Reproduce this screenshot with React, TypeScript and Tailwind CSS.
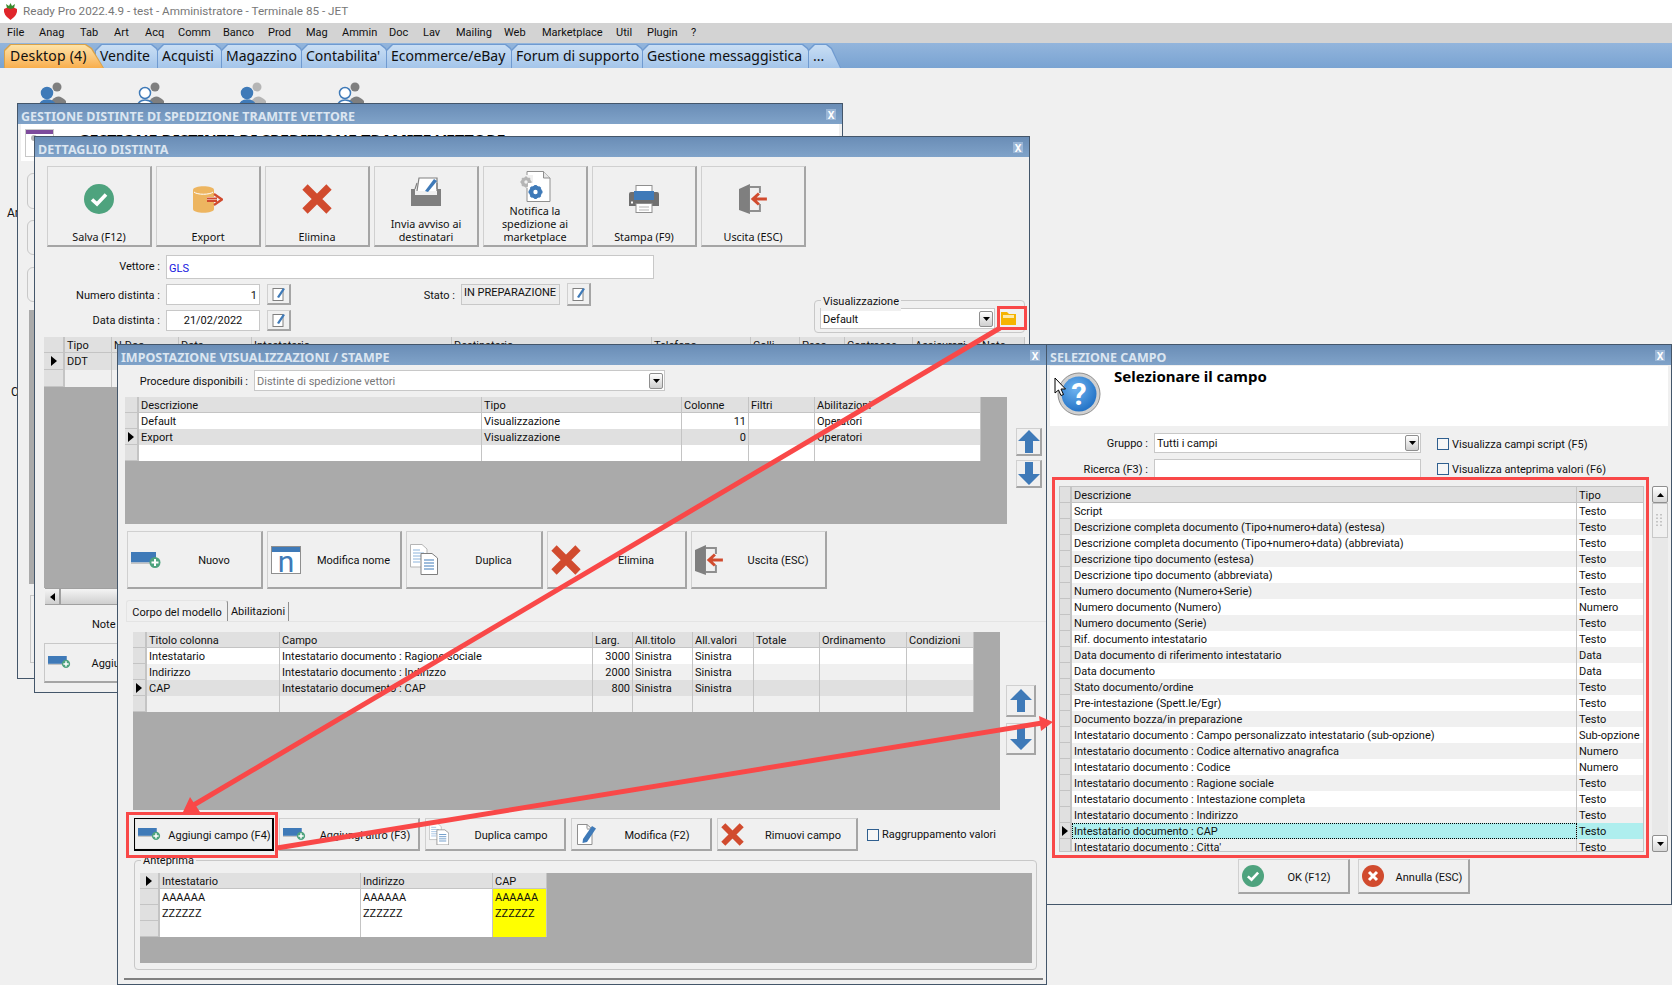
import type { ReactNode } from "react";

const menus = [
  { label: "File", w: "w-[32px]" },
  { label: "Anag", w: "w-[41px]" },
  { label: "Tab", w: "w-[34px]" },
  { label: "Art", w: "w-[31px]" },
  { label: "Acq", w: "w-[33px]" },
  { label: "Comm", w: "w-[45px]" },
  { label: "Banco", w: "w-[45px]" },
  { label: "Prod", w: "w-[38px]" },
  { label: "Mag", w: "w-[36px]" },
  { label: "Ammin", w: "w-[47px]" },
  { label: "Doc", w: "w-[34px]" },
  { label: "Lav", w: "w-[33px]" },
  { label: "Mailing", w: "w-[48px]" },
  { label: "Web", w: "w-[38px]" },
  { label: "Marketplace", w: "w-[74px]" },
  { label: "Util", w: "w-[31px]" },
  { label: "Plugin", w: "w-[44px]" },
  { label: "?", w: "w-[10px]" },
];

const tabs = [
  { label: "Vendite", w: "w-[71px]" },
  { label: "Acquisti", w: "w-[73px]" },
  { label: "Magazzino", w: "w-[89px]" },
  { label: "Contabilita'", w: "w-[94px]" },
  { label: "Ecommerce/eBay", w: "w-[134px]" },
  { label: "Forum di supporto", w: "w-[140px]" },
  { label: "Gestione messaggistica", w: "w-[175px]" },
  { label: "...", w: "w-[33px]" },
];

const fields: [string, string][] = [
  ["Script", "Testo"],
  ["Descrizione completa documento (Tipo+numero+data) (estesa)", "Testo"],
  ["Descrizione completa documento (Tipo+numero+data) (abbreviata)", "Testo"],
  ["Descrizione tipo documento (estesa)", "Testo"],
  ["Descrizione tipo documento (abbreviata)", "Testo"],
  ["Numero documento (Numero+Serie)", "Testo"],
  ["Numero documento (Numero)", "Numero"],
  ["Numero documento (Serie)", "Testo"],
  ["Rif. documento intestatario", "Testo"],
  ["Data documento di riferimento intestatario", "Data"],
  ["Data documento", "Data"],
  ["Stato documento/ordine", "Testo"],
  ["Pre-intestazione (Spett.le/Egr)", "Testo"],
  ["Documento bozza/in preparazione", "Testo"],
  ["Intestatario documento : Campo personalizzato intestatario (sub-opzione)", "Sub-opzione"],
  ["Intestatario documento : Codice alternativo anagrafica", "Numero"],
  ["Intestatario documento : Codice", "Numero"],
  ["Intestatario documento : Ragione sociale", "Testo"],
  ["Intestatario documento : Intestazione completa", "Testo"],
  ["Intestatario documento : Indirizzo", "Testo"],
  ["Intestatario documento : CAP", "Testo"],
  ["Intestatario documento : Citta'", "Testo"],
];

function Marker() {
  return (
    <svg width="6" height="10" viewBox="0 0 6 10">
      <path d="M0 0 L6 5 L0 10 Z" fill="#000" />
    </svg>
  );
}

function CheckIcon({ size = 30 }: { size?: number }) {
  return (
    <svg width={size} height={size} viewBox="0 0 30 30">
      <circle cx="15" cy="15" r="15" fill="#4ea37e" />
      <path d="M8 15.5 L13 20 L22 10.5" fill="none" stroke="#fff" strokeWidth="3.6" />
    </svg>
  );
}

function CrossIcon({ size = 30 }: { size?: number }) {
  return (
    <svg width={size} height={size} viewBox="0 0 30 30">
      <path d="M3 3 L27 27 M27 3 L3 27" fill="none" stroke="#d14b2e" strokeWidth="7.5" />
    </svg>
  );
}

function CancelIcon() {
  return (
    <svg width="22" height="22" viewBox="0 0 22 22">
      <circle cx="11" cy="11" r="11" fill="#d14b2e" />
      <path d="M7 7 L15 15 M15 7 L7 15" fill="none" stroke="#fff" strokeWidth="3" />
    </svg>
  );
}

function ExportIcon() {
  return (
    <svg width="30" height="27" viewBox="0 0 30 27">
      <path d="M0 4 C0 -1 21 -1 21 4 L21 23 C21 28 0 28 0 23 Z" fill="#edb560" />
      <path d="M1 6 C4 9 17 9 20 6" fill="none" stroke="#fff" strokeWidth="1" />
      <rect x="14" y="11" width="9" height="5" fill="#fff" />
      <path d="M14 12.5 H24 M14 15 H24 M21 8 L29 13.5 L21 19" fill="none" stroke="#d14b2e" strokeWidth="2.2" />
    </svg>
  );
}

function InboxIcon() {
  return (
    <svg width="30" height="29" viewBox="0 0 30 29">
      <path d="M6 14 L8 1 H26 V14" fill="#fff" stroke="#808080" strokeWidth="1.2" />
      <path d="M14 14 L23 2 L26 4 L17 15 Z" fill="#3f7ab8" />
      <path d="M0 12 H4 V18 H26 V12 H30 V29 H0 Z" fill="#7f7f7f" />
      <path d="M4 12 L6 6 M26 12 V6" stroke="#808080" strokeWidth="1.2" />
    </svg>
  );
}

function Gear({ x, y, r, color }: { x: number; y: number; r: number; color: string }) {
  return (
    <g>
      <circle cx={x} cy={y} r={r * 0.62} fill="none" stroke={color} strokeWidth={r * 0.62} />
      <path
        d={`M${x - r} ${y} H${x + r} M${x} ${y - r} V${y + r} M${x - r * 0.7} ${y - r * 0.7} L${x + r * 0.7} ${y + r * 0.7} M${x + r * 0.7} ${y - r * 0.7} L${x - r * 0.7} ${y + r * 0.7}`}
        stroke={color}
        strokeWidth={r * 0.36}
        strokeDasharray={`${r * 0.5} ${r} ${r * 0.5}`}
      />
    </g>
  );
}

function GearDocIcon() {
  return (
    <svg width="31" height="31" viewBox="0 0 31 31">
      <path d="M7 .5 H23.5 L30 7 V30.5 H7 Z" fill="#fff" stroke="#8f8f8f" />
      <path d="M23.5 .5 V7 H30" fill="#e6e6e6" stroke="#8f8f8f" />
      <rect x="0" y="4" width="13" height="13" fill="#f0f0f0" />
      <Gear x={6} y={11} r={5.5} color="#b5b5b5" />
      <rect x="8" y="12" width="16" height="16" fill="#fff" />
      <Gear x={15.5} y={21} r={7} color="#3f7ab8" />
    </svg>
  );
}

function PrinterIcon() {
  return (
    <svg width="30" height="28" viewBox="0 0 30 28">
      <rect x="7" y="0.5" width="16" height="10" fill="#fff" stroke="#8f8f8f" />
      <path d="M2 7 H28 Q30 7 30 9 V21 H0 V9 Q0 7 2 7 Z" fill="#6f6f6f" />
      <rect x="5" y="6" width="20" height="9" fill="#3f7ab8" />
      <rect x="7" y="18.5" width="16" height="9" fill="#fff" stroke="#8f8f8f" />
      <path d="M10 22 H20 M10 25 H20" stroke="#b5b5b5" />
      <rect x="2" y="16.5" width="2" height="2" fill="#fff" />
    </svg>
  );
}

function ExitIcon({ size = 30 }: { size?: number }) {
  return (
    <svg width={size * 0.93} height={size} viewBox="0 0 28 30">
      <path d="M0 5 L11 0 V30 L0 26 Z" fill="#7f7f7f" />
      <path d="M11 3 H21 V9 M21 20 V27 H11" fill="none" stroke="#8f8f8f" strokeWidth="2" />
      <path d="M28 15 H15 M20 9.5 L14 15 L20 20.5" fill="none" stroke="#d14b2e" strokeWidth="3" />
    </svg>
  );
}

function AddIcon({ scale = 1 }: { scale?: number }) {
  return (
    <svg width={30 * scale} height={16 * scale} viewBox="0 0 30 16">
      <rect x="0" y="0" width="25" height="10.5" fill="#3f7ab8" />
      <rect x="0" y="10.5" width="22" height="1.5" fill="#c4c4c4" />
      <circle cx="24" cy="10.5" r="5.5" fill="#4ea37e" />
      <path d="M24 7 V14 M20.5 10.5 H27.5" stroke="#fff" strokeWidth="2" />
    </svg>
  );
}

function RenameIcon() {
  return (
    <div className="flex h-[28px] w-[30px] flex-col border border-[#8f8f8f] bg-white">
      <div className="h-[5px] bg-[#3f7ab8]" />
      <div className="flex-1 text-center text-[30px] leading-[20px] text-[#3f7ab8]">n</div>
    </div>
  );
}

function DuplicateIcon({ scale = 1 }: { scale?: number }) {
  return (
    <svg width={28 * scale} height={31 * scale} viewBox="0 0 28 31">
      <path d="M.5 .5 H12 L17 5 V23 H.5 Z" fill="#fff" stroke="#b5b5b5" />
      <path d="M3 6 H10 M3 9 H14 M3 12 H14 M3 15 H14 M3 18 H10" stroke="#8db4dc" />
      <path d="M11 9.5 H22 L27.5 14 V30.5 H11 Z" fill="#fff" stroke="#7f7f7f" />
      <path d="M14 16 H24 M14 19 H24 M14 22 H24 M14 25 H24" stroke="#3f7ab8" />
    </svg>
  );
}

function EditDocIcon() {
  return (
    <svg width="24" height="21" viewBox="0 0 24 21">
      <path d="M2.5 .5 H12 L17 5 V20.5 H2.5 Z" fill="#fff" stroke="#8f8f8f" />
      <path d="M12 4.5 V.5 M12 5 H17" stroke="#8f8f8f" />
      <path d="M8 15 L17 2 L21 4.5 L12 18 L7.5 19 Z" fill="#3f7ab8" />
    </svg>
  );
}

function ArrowButton({ dir, size = "h-[28px] w-[26px]" }: { dir: "up" | "down"; size?: string }) {
  return (
    <div className={`flex items-center justify-center border border-[#d0d0d0] border-r-2 border-b-2 border-r-[#a5a5a5] border-b-[#a5a5a5] ${size}`}>
      <svg width="22" height="23" viewBox="0 0 22 23">
        <path d={dir === "up" ? "M11 0 L22 11 H15 V23 H7 V11 H0 Z" : "M11 23 L22 12 H15 V0 H7 V12 H0 Z"} fill="#3f7ab8" />
      </svg>
    </div>
  );
}

function SmallEdit({ h = "h-[21px]" }: { h?: string }) {
  return (
    <div className={`flex w-[24px] items-center justify-center border border-[#d0d0d0] border-r-2 border-b-2 border-r-[#a5a5a5] border-b-[#a5a5a5] ${h}`}>
      <svg width="14" height="14" viewBox="0 0 14 14">
        <rect x="1" y="1.5" width="10" height="12" fill="#fff" stroke="#808080" />
        <path d="M5 10 L11 1 L13 2 L7 11 Z" fill="#3f7ab8" />
      </svg>
    </div>
  );
}

function ComboArrow() {
  return (
    <div className="flex h-[16px] w-[14px] shrink-0 items-center justify-center rounded-[2px] border border-[#8f8f8f] bg-gradient-to-b from-white to-[#cfcfcf]">
      <svg width="7" height="4" viewBox="0 0 7 4">
        <path d="M0 0 H7 L3.5 4 Z" fill="#000" />
      </svg>
    </div>
  );
}

function Combo({ text, className, muted }: { text: string; className: string; muted?: boolean }) {
  return (
    <div className={`flex items-center justify-between border border-[#c8c8c8] bg-white pr-px pl-[2px] ${className}`}>
      <span className={`pt-[3px] ${muted ? "text-[#777777]" : ""}`}>{text}</span>
      <ComboArrow />
    </div>
  );
}

function Checkbox({ label }: { label: string }) {
  return (
    <div className="flex items-center gap-[3px]">
      <div className="h-[12px] w-[12px] border border-[#2f5f8f] bg-[#f6f6f6]" />
      <span className="pt-[2px]">{label}</span>
    </div>
  );
}

function BigButton({ icon, label, iconPad }: { icon: ReactNode; label: string[]; iconPad: string }) {
  return (
    <div className={`flex h-[81px] w-[105px] flex-col items-center border border-[#d0d0d0] border-r-2 border-b-2 border-r-[#a5a5a5] border-b-[#a5a5a5] pb-[2px] ${iconPad}`}>
      {icon}
      <div className="mt-auto text-center font-['Noto_Sans',sans-serif] text-[10.8px] leading-[13px]">
        {label.map((l) => (
          <div key={l}>{l}</div>
        ))}
      </div>
    </div>
  );
}

function WideButton({ icon, label, className, iconBox = "" }: { icon: ReactNode; label: string; className: string; iconBox?: string }) {
  return (
    <div className={`flex items-center border border-[#d0d0d0] border-r-2 border-b-2 border-r-[#a5a5a5] border-b-[#a5a5a5] pl-[3px] ${className}`}>
      <div className={iconBox}>{icon}</div>
      <span className="flex-1 pt-[4px] pl-[6px] text-center">{label}</span>
    </div>
  );
}

type GridRow = { cells: string[]; bg?: string; marker?: boolean };

function DataGrid({
  cols,
  headers,
  rows,
  className,
  right = [],
  hl,
  corner,
  rowH = "h-[16px]",
}: {
  cols: string;
  headers: string[];
  rows: GridRow[];
  className: string;
  right?: number[];
  hl?: (row: number, col: number) => string;
  corner?: boolean;
  rowH?: string;
}) {
  return (
    <div className={`overflow-hidden bg-[#aaaaaa] ${className}`}>
      <div className={`grid w-fit ${cols}`}>
        <div className="flex h-[16px] items-center justify-center border-r-2 border-b border-[#c4c4c4] bg-[#e0e0e0]">{corner && <Marker />}</div>
        {headers.map((h) => (
          <div key={h} className="h-[16px] truncate border-r border-b border-[#c4c4c4] bg-[#e0e0e0] px-[2px] leading-[17px]">
            {h}
          </div>
        ))}
        {rows.map((r, i) => [
          <div key={`m${i}`} className={`flex items-center justify-center border-r-2 border-b border-[#c4c4c4] bg-[#e0e0e0] ${rowH}`}>
            {r.marker && <Marker />}
          </div>,
          ...r.cells.map((c, j) => (
            <div
              key={`${i}-${j}`}
              className={`truncate border-r border-[#c4c4c4] px-[2px] leading-[18px] ${rowH} ${r.bg ?? "bg-white"} ${right.includes(j) ? "text-right" : ""} ${hl ? hl(i, j) : ""}`}
            >
              {c}
            </div>
          )),
        ])}
      </div>
    </div>
  );
}

function Window({ title, className, children }: { title: string; className: string; children: ReactNode }) {
  return (
    <div className={`absolute flex flex-col overflow-hidden border border-[#44566a] bg-[#f0f0f0] ${className}`}>
      <div className="flex h-[20px] shrink-0 items-center justify-between bg-gradient-to-b from-[#6a8db6] to-[#80a3c9] pr-[6px] pl-[3px]">
        <span className="pt-[6px] font-['Noto_Sans',sans-serif] text-[12.5px] font-bold text-[#dce6f1]">{title}</span>
        <span className="mt-[1px] flex h-[11px] w-[10px] items-center justify-center bg-[#9ab6d6] font-['Noto_Sans',sans-serif] text-[10px] leading-none font-bold text-white">X</span>
      </div>
      {children}
    </div>
  );
}

function UserIcon({ className, outline, muted }: { className: string; outline?: boolean; muted?: boolean }) {
  return (
    <svg className={`absolute top-[81px] ${className}`} width="28" height="30" viewBox="0 0 28 30">
      <circle cx="19" cy="6" r="4.5" fill={muted ? "#b5b5b5" : "#7f7f7f"} />
      <path d="M12 22 Q19 10 28 20 V30 H12 Z" fill={muted ? "#b5b5b5" : "#7f7f7f"} />
      <circle cx="9" cy="12" r="5.5" fill={outline ? "#fff" : "#3f7ab8"} stroke="#3f7ab8" strokeWidth="1.5" />
      <path d="M0 30 Q1 19 9 19 Q18 19 19 30 Z" fill={outline ? "#fff" : "#3f7ab8"} stroke="#3f7ab8" strokeWidth="1.5" />
    </svg>
  );
}

export default function App() {
  return (
    <div className="relative h-[985px] w-[1672px] overflow-hidden bg-[#f0f0f0] font-['Roboto',sans-serif] text-[11px] text-[#101010]">
      {/* title bar */}
      <div className="flex h-[23px] items-center gap-[4px] bg-white pl-[3px] text-[11.7px] text-[#777777]">
        <svg width="15" height="17" viewBox="0 0 15 17">
          <path d="M1 6 Q7.5 2 14 6 Q15 12 7.5 17 Q0 12 1 6 Z" fill="#e0262b" />
          <path d="M3 1 L6 3 L7.5 0 L9 3 L12 1 L11 5 L7.5 6 L4 5 Z" fill="#3b8a2e" />
        </svg>
        <span className="ml-[1px]">Ready Pro 2022.4.9 - test - Amministratore - Terminale 85 - JET</span>
      </div>

      {/* menu */}
      <div className="flex h-[20px] items-center bg-[#d3d3d3] pl-[7px]">
        {menus.map((m) => (
          <span key={m.label} className={m.w}>
            {m.label}
          </span>
        ))}
      </div>

      {/* module tabs */}
      <div className="flex h-[25px] items-end bg-gradient-to-b from-[#93b5dc] to-[#79a3d2] pl-[4px] font-['Noto_Sans',sans-serif] text-[14px]">
        <div className="relative z-10 h-[24px] w-[100px] bg-[#d9a24a] px-px pt-px [clip-path:polygon(0_100%,0_6px,6px_0,calc(100%-18px)_0,calc(100%-12px)_4px,100%_100%)]">
          <div className="h-full bg-gradient-to-b from-[#fde3a7] to-[#f8ae4c] pl-[5px] leading-[21px] tracking-[0.2px] [clip-path:polygon(0_100%,0_6px,6px_0,calc(100%-18px)_0,calc(100%-12px)_4px,100%_100%)]">Desktop (4)</div>
        </div>
        {tabs.map((t) => (
          <div key={t.label} className={`-ml-[9px] h-[24px] bg-[#6f9ad0] px-px pt-px [clip-path:polygon(0_100%,0_6px,6px_0,calc(100%-14px)_0,calc(100%-9px)_4px,100%_100%)] ${t.w}`}>
            <div className="h-full bg-gradient-to-b from-[#c9def4] to-[#a4c5ea] pl-[4px] leading-[21px] whitespace-nowrap [clip-path:polygon(0_100%,0_6px,6px_0,calc(100%-14px)_0,calc(100%-9px)_4px,100%_100%)]">{t.label}</div>
          </div>
        ))}
      </div>

      {/* desktop items behind the windows */}
      <UserIcon className="left-[38px]" />
      <UserIcon className="left-[136px]" outline />
      <UserIcon className="left-[238px]" muted />
      <UserIcon className="left-[336px]" outline />
      <span className="absolute top-[204px] left-[7px] text-[12px]">Ar</span>
      <span className="absolute top-[383px] left-[11px] text-[12px]">C</span>

      {/* window 1 */}
      <Window title="GESTIONE DISTINTE DI SPEDIZIONE TRAMITE VETTORE" className="top-[103px] left-[17px] h-[576px] w-[826px]">
        <div className="mx-[3px] flex h-[37px] shrink-0 gap-[24px] bg-white pt-[5px] pl-[4px]">
          <div className="h-[28px] w-[29px] border border-[#c8c8c8] bg-white">
            <div className="h-[4px] bg-[#7d4b9c]" />
            <div className="mt-[1px] ml-[5px] h-[6px] w-[6px] rounded-full bg-[#b5b5b5]" />
          </div>
          <span className="font-['Noto_Sans',sans-serif] text-[16px] font-bold text-black">GESTIONE DISTINTE DI SPEDIZIONE TRAMITE VETTORE</span>
        </div>
        <div className="mt-[12px] ml-[9px] h-[36px] w-[300px] rounded-md border border-[#c8c8c8]" />
        <div className="mt-[11px] ml-[9px] h-[35px] w-[300px] rounded-md border border-[#c8c8c8]" />
        <div className="mt-[12px] ml-[9px] h-[35px] w-[300px] rounded-md border border-[#c8c8c8]" />
        <div className="mt-[8px] ml-[11px] h-[274px] w-[300px] bg-[#aaaaaa]" />
        <div className="mt-[11px] ml-[12px] h-[68px] w-[300px] border border-[#c8c8c8]" />
      </Window>

      {/* window 2 */}
      <Window title="DETTAGLIO DISTINTA" className="top-[136px] left-[34px] h-[557px] w-[996px]">
        <div className="mt-[9px] ml-[12px] flex shrink-0 gap-[4px]">
          <BigButton icon={<CheckIcon />} label={["Salva (F12)"]} iconPad="pt-[17px]" />
          <BigButton icon={<ExportIcon />} label={["Export"]} iconPad="pt-[19px]" />
          <BigButton icon={<CrossIcon />} label={["Elimina"]} iconPad="pt-[17px]" />
          <BigButton icon={<InboxIcon />} label={["Invia avviso ai", "destinatari"]} iconPad="pt-[10px]" />
          <BigButton icon={<GearDocIcon />} label={["Notifica la", "spedizione ai", "marketplace"]} iconPad="pt-[4px]" />
          <BigButton icon={<PrinterIcon />} label={["Stampa (F9)"]} iconPad="pt-[18px]" />
          <BigButton icon={<ExitIcon />} label={["Uscita (ESC)"]} iconPad="pt-[17px]" />
        </div>
        <div className="mt-[8px] flex h-[24px] shrink-0 items-center gap-[6px]">
          <span className="w-[125px] pt-[1px] text-right">Vettore :</span>
          <div className="h-full w-[488px] border border-[#c8c8c8] bg-white pl-[2px] leading-[26px] text-[#1414e0]">GLS</div>
        </div>
        <div className="mt-[5px] flex shrink-0">
          <div className="flex flex-col gap-[5px]">
            <div className="flex h-[21px] items-center">
              <span className="w-[125px] pt-[3px] text-right">Numero distinta :</span>
              <div className="ml-[6px] h-full w-[94px] border border-[#c8c8c8] bg-white pr-[2px] text-right leading-[21px]">1</div>
              <div className="ml-[7px]">
                <SmallEdit />
              </div>
              <span className="w-[164px] pt-[3px] text-right">Stato :</span>
              <div className="ml-[6px] h-full w-[99px] border border-[#c8c8c8] bg-[#ececec] pl-[2px] leading-[15px]">IN PREPARAZIONE</div>
              <div className="ml-[7px]">
                <SmallEdit h="h-[23px]" />
              </div>
            </div>
            <div className="flex h-[21px] items-center">
              <span className="w-[125px] pt-[2px] text-right">Data distinta :</span>
              <div className="ml-[6px] h-full w-[94px] border border-[#c8c8c8] bg-white text-center leading-[20px]">21/02/2022</div>
              <div className="ml-[7px]">
                <SmallEdit />
              </div>
            </div>
          </div>
          <div className="relative mt-[16px] ml-[223px] flex h-[33px] w-[211px] items-start gap-[5px] rounded-[4px] border border-[#c8c8c8] pt-[7px] pl-[5px]">
            <span className="absolute -top-[7px] left-[6px] bg-[#f0f0f0] px-[2px]">Visualizzazione</span>
            <Combo text="Default" className="h-[21px] w-[175px]" />
            <svg className="mt-[3px]" width="17" height="15" viewBox="0 0 17 15">
              <path d="M1 1 H7 L9 3 H16 V14 H1 Z" fill="#f5b400" />
              <rect x="3" y="4" width="11" height="3" fill="#fde9a8" />
            </svg>
          </div>
        </div>
        <DataGrid
          className="mt-[4px] ml-[9px] h-[251px] w-[981px] shrink-0"
          cols="grid-cols-[21px_47px_67px_73px_200px_200px_99px_49px_45px_68px_67px_45px]"
          headers={["Tipo", "N.Doc", "Data", "Intestatario", "Destinatario", "Telefono", "Colli", "Peso", "Contrassegno", "Assicurazione", "Note"]}
          rows={[
            { cells: ["DDT", "", "", "", "", "", "", "", "", "", ""], bg: "bg-[#e0e0e0]", marker: true },
            { cells: ["", "", "", "", "", "", "", "", "", "", ""], bg: "bg-[#f0f0f0]" },
          ]}
          rowH="h-[17px]"
        />
        <div className="ml-[10px] flex h-[17px] w-[981px] shrink-0 border-y border-[#a0a0a0] bg-gradient-to-b from-[#f4f4f4] to-[#cfcfcf]">
          <div className="flex w-[16px] items-center justify-center border-r-2 border-[#a0a0a0]">
            <svg width="5" height="8" viewBox="0 0 5 8">
              <path d="M5 0 L0 4 L5 8 Z" fill="#000" />
            </svg>
          </div>
        </div>
        <div className="mt-[12px] ml-[57px] shrink-0">Note</div>
        <div className="mt-[9px] ml-[9px] flex h-[40px] w-[300px] shrink-0 items-center gap-[21px] border border-[#c8c8c8] border-b-2 border-b-[#a5a5a5] pl-[3px]">
          <AddIcon scale={0.75} />
          <span className="pt-[4px]">Aggiungi</span>
        </div>
      </Window>

      {/* window 3 */}
      <Window title="IMPOSTAZIONE VISUALIZZAZIONI / STAMPE" className="top-[344px] left-[117px] h-[641px] w-[930px]">
        <div className="mt-[5px] flex h-[21px] shrink-0 items-center gap-[6px]">
          <span className="w-[130px] pt-[3px] text-right">Procedure disponibili :</span>
          <Combo text="Distinte di spedizione vettori" muted className="h-[21px] w-[411px]" />
        </div>
        <div className="mt-[6px] ml-[7px] flex shrink-0 gap-[9px]">
          <DataGrid
            className="h-[127px] w-[882px]"
            cols="grid-cols-[14px_343px_200px_67px_66px_166px]"
            headers={["Descrizione", "Tipo", "Colonne", "Filtri", "Abilitazioni"]}
            right={[2]}
            rows={[
              { cells: ["Default", "Visualizzazione", "11", "", "Operatori"] },
              { cells: ["Export", "Visualizzazione", "0", "", "Operatori"], bg: "bg-[#e0e0e0]", marker: true },
              { cells: ["", "", "", "", ""] },
            ]}
          />
          <div className="mt-[31px] flex flex-col gap-[4px]">
            <ArrowButton dir="up" />
            <ArrowButton dir="down" />
          </div>
        </div>
        <div className="mt-[7px] ml-[9px] flex shrink-0 gap-[4px]">
          <WideButton className="h-[58px] w-[136px]" iconBox="w-[30px]" icon={<AddIcon />} label="Nuovo" />
          <WideButton className="h-[58px] w-[135px]" iconBox="w-[30px]" icon={<RenameIcon />} label="Modifica nome" />
          <WideButton className="h-[58px] w-[137px]" iconBox="w-[30px]" icon={<DuplicateIcon />} label="Duplica" />
          <WideButton className="h-[58px] w-[140px]" iconBox="w-[30px]" icon={<CrossIcon />} label="Elimina" />
          <WideButton className="h-[58px] w-[136px]" iconBox="w-[30px]" icon={<ExitIcon />} label="Uscita (ESC)" />
        </div>
        <div className="mt-[12px] ml-[8px] flex h-[21px] shrink-0 items-end border-b border-[#e4e4e4]">
          <div className="flex h-[21px] w-[102px] items-center justify-center rounded-t-[3px] border-t border-r border-l border-t-[#e4e4e4] border-r-[#909090] border-l-[#e4e4e4] pt-[4px]">Corpo del modello</div>
          <div className="flex h-[19px] w-[61px] items-center justify-center border-r border-[#909090] pt-[2px]">Abilitazioni</div>
        </div>
        <div className="mt-[10px] ml-[15px] flex shrink-0 gap-[6px]">
          <DataGrid
            className="h-[178px] w-[867px]"
            cols="grid-cols-[14px_133px_313px_40px_60px_61px_66px_87px_67px]"
            headers={["Titolo colonna", "Campo", "Larg.", "All.titolo", "All.valori", "Totale", "Ordinamento", "Condizioni"]}
            right={[2]}
            rows={[
              { cells: ["Intestatario", "Intestatario documento : Ragione sociale", "3000", "Sinistra", "Sinistra", "", "", ""] },
              { cells: ["Indirizzo", "Intestatario documento : Indirizzo", "2000", "Sinistra", "Sinistra", "", "", ""], bg: "bg-[#f0f0f0]" },
              { cells: ["CAP", "Intestatario documento : CAP", "800", "Sinistra", "Sinistra", "", "", ""], bg: "bg-[#e0e0e0]", marker: true },
              { cells: ["", "", "", "", "", "", "", ""], bg: "bg-[#f0f0f0]" },
            ]}
          />
          <div className="mt-[53px] flex flex-col gap-[6px]">
            <ArrowButton dir="up" size="h-[32px] w-[30px]" />
            <ArrowButton dir="down" size="h-[32px] w-[30px]" />
          </div>
        </div>
        <div className="mt-[8px] ml-[16px] flex shrink-0 items-center gap-[5px]">
          <WideButton className="h-[33px] w-[140px] border-black! shadow-[inset_0_0_0_1px_#e8e8e8]" iconBox="w-[23px]" icon={<AddIcon scale={0.75} />} label="Aggiungi campo (F4)" />
          <WideButton className="h-[33px] w-[141px]" iconBox="w-[23px]" icon={<AddIcon scale={0.75} />} label="Aggiungi altro (F3)" />
          <WideButton className="h-[33px] w-[141px]" iconBox="w-[23px]" icon={<DuplicateIcon scale={0.72} />} label="Duplica campo" />
          <WideButton className="h-[33px] w-[141px]" iconBox="w-[23px]" icon={<EditDocIcon />} label="Modifica (F2)" />
          <WideButton className="h-[33px] w-[141px]" iconBox="w-[23px]" icon={<CrossIcon size={23} />} label="Rimuovi campo" />
          <div className="ml-[4px]">
            <Checkbox label="Raggruppamento valori" />
          </div>
        </div>
        <div className="relative mt-[9px] ml-[16px] h-[110px] w-[903px] shrink-0 rounded-[4px] border border-[#c8c8c8] px-[5px] pt-[12px]">
          <span className="absolute -top-[8px] left-[6px] bg-[#f0f0f0] px-[2px]">Anteprima</span>
          <DataGrid
            className="h-[90px] w-[892px]"
            cols="grid-cols-[20px_201px_132px_54px]"
            headers={["Intestatario", "Indirizzo", "CAP"]}
            corner
            hl={(_, j) => (j === 2 ? "bg-[#ffff00]!" : "")}
            rows={[
              { cells: ["AAAAAA", "AAAAAA", "AAAAAA"] },
              { cells: ["ZZZZZZ", "ZZZZZZ", "ZZZZZZ"] },
              { cells: ["", "", ""] },
            ]}
          />
        </div>
        <div className="mt-[8px] ml-[6px] h-[2px] w-[919px] shrink-0 bg-[#808080]" />
      </Window>

      {/* window 4 */}
      <Window title="SELEZIONE CAMPO" className="top-[344px] left-[1046px] h-[561px] w-[626px]">
        <div className="relative mx-[3px] mt-px flex h-[60px] shrink-0 bg-white pt-[6px] pl-[7px]">
          <svg width="44" height="44" viewBox="0 0 44 44">
            <defs>
              <radialGradient id="qfill" cx="40%" cy="35%" r="70%">
                <stop offset="0" stopColor="#6fb4f0" />
                <stop offset="1" stopColor="#1f6fc4" />
              </radialGradient>
            </defs>
            <circle cx="22" cy="22" r="21" fill="#d0d0d0" stroke="#8f8f8f" />
            <circle cx="22" cy="22" r="17.5" fill="url(#qfill)" />
            <text x="22" y="33" textAnchor="middle" fontSize="31" fontWeight="700" fill="#fff">?</text>
          </svg>
          <span className="-mt-[7px] ml-[13px] font-['Noto_Sans',sans-serif] text-[15px] font-bold text-black">Selezionare il campo</span>
          <svg className="absolute top-[11px] left-[4px]" width="13" height="20" viewBox="0 0 13 20">
            <path d="M1 1 V16 L4.5 13 L7 18.5 L9.5 17.5 L7 12 L11.5 12 Z" fill="#fff" stroke="#000" />
          </svg>
        </div>
        <div className="mt-[7px] flex h-[20px] shrink-0 items-center">
          <span className="w-[101px] pt-[2px] text-right">Gruppo :</span>
          <Combo text="Tutti i campi" className="ml-[6px] h-[20px] w-[267px]" />
          <div className="mt-[2px] ml-[16px]">
            <Checkbox label="Visualizza campi script (F5)" />
          </div>
        </div>
        <div className="mt-[6px] flex h-[20px] shrink-0 items-center">
          <span className="w-[101px] pt-[2px] text-right">Ricerca (F3) :</span>
          <div className="ml-[6px] h-[20px] w-[267px] border border-[#c8c8c8] bg-white" />
          <div className="ml-[16px]">
            <Checkbox label="Visualizza anteprima valori (F6)" />
          </div>
        </div>
        <div className="mt-[7px] ml-[12px] flex h-[366px] shrink-0 gap-[8px]">
          <DataGrid
            className="h-full w-[585px] border border-[#c4c4c4]"
            cols="grid-cols-[12px_505px_68px]"
            headers={["Descrizione", "Tipo"]}
            rows={fields.map(([d, t], i) => ({
              cells: [d, t],
              marker: i === 20,
              bg: i === 20 ? "bg-[#aeeeee]" : i % 2 === 0 ? "bg-white" : "bg-[#f0f0f0]",
            }))}
            hl={(i, j) => (i === 20 && j === 0 ? "outline-1 -outline-offset-1 outline-dotted outline-black" : "")}
          />
          <div className="flex w-[16px] flex-col justify-between bg-[#e8e8e8]">
            <div className="flex h-[17px] items-center justify-center rounded-[2px] border border-[#8f8f8f] bg-gradient-to-b from-white to-[#d8d8d8]">
              <svg width="7" height="4" viewBox="0 0 7 4">
                <path d="M0 4 H7 L3.5 0 Z" fill="#000" />
              </svg>
            </div>
            <div className="mb-auto flex h-[35px] items-center justify-center border border-[#c8c8c8] bg-[#f0f0f0]">
              <svg width="8" height="16" viewBox="0 0 8 16">
                <path d="M1 1 V15 M5 1 V15" stroke="#b5b5b5" strokeWidth="1.5" strokeDasharray="1.5 2" />
              </svg>
            </div>
            <div className="flex h-[17px] items-center justify-center rounded-[2px] border border-[#8f8f8f] bg-gradient-to-b from-white to-[#d8d8d8]">
              <svg width="7" height="4" viewBox="0 0 7 4">
                <path d="M0 0 H7 L3.5 4 Z" fill="#000" />
              </svg>
            </div>
          </div>
        </div>
        <div className="mt-[7px] ml-[191px] flex shrink-0 gap-[8px]">
          <WideButton className="h-[35px] w-[112px]" iconBox="w-[22px]" icon={<CheckIcon size={22} />} label="OK (F12)" />
          <WideButton className="h-[35px] w-[112px]" iconBox="w-[22px]" icon={<CancelIcon />} label="Annulla (ESC)" />
        </div>
      </Window>

      {/* red annotations */}
      <svg className="pointer-events-none absolute top-0 left-0" width="1672" height="985" viewBox="0 0 1672 985">
        <g fill="none" stroke="#f94848" strokeWidth="3">
          <rect x="998.5" y="307.5" width="27" height="21" />
          <rect x="127.5" y="813.5" width="149" height="43" />
          <rect x="1053.5" y="478.5" width="594" height="378" />
        </g>
        <path d="M1000 328 L192 806" stroke="#f94848" strokeWidth="5" />
        <path d="M183 812 L190 797 L200 812 Z" fill="#f94848" />
        <path d="M277 848 L1042 723" stroke="#f94848" strokeWidth="5" />
        <path d="M1053 722 L1039 716 L1041 731 Z" fill="#f94848" />
      </svg>
    </div>
  );
}
